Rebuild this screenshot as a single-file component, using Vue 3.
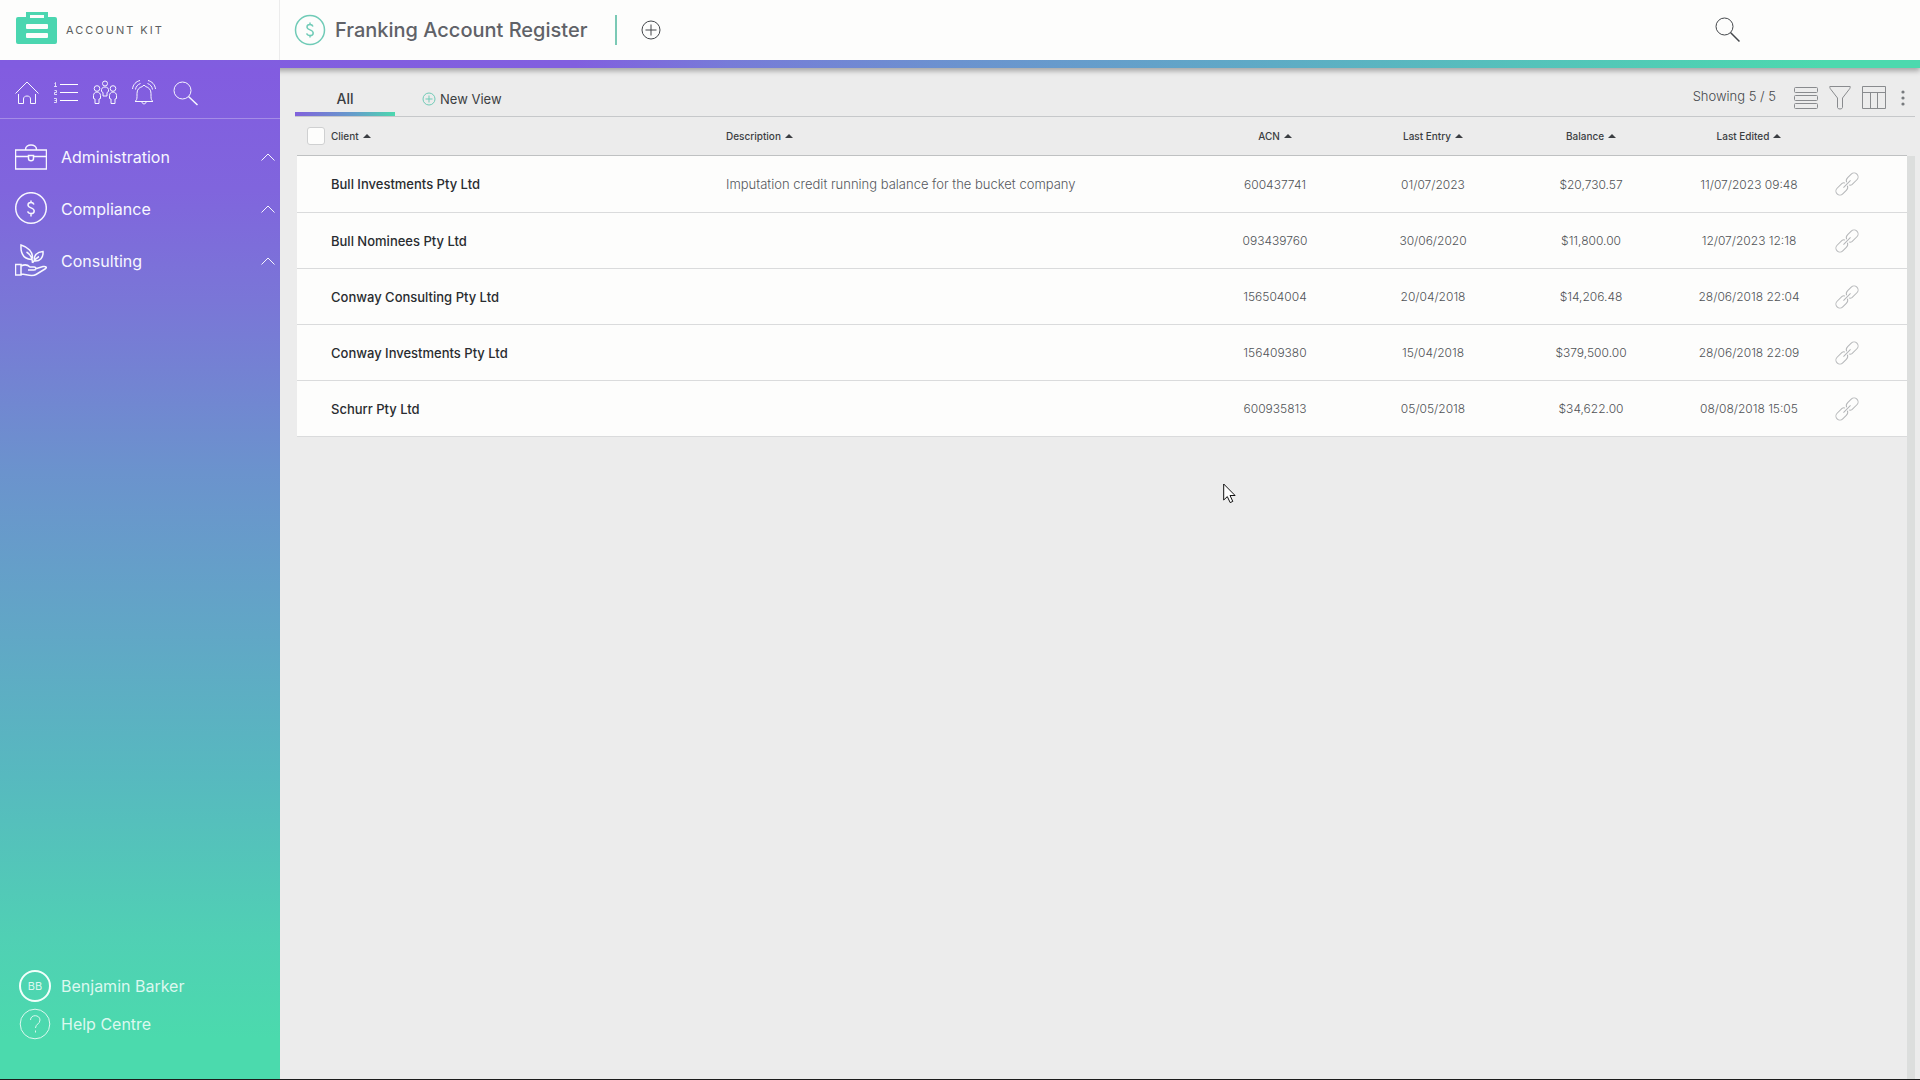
<script setup>
import { ref } from 'vue'

const menu = [
  { label: 'Administration', icon: 'briefcase' },
  { label: 'Compliance', icon: 'dollar' },
  { label: 'Consulting', icon: 'plant' },
]

const columns = [
  { key: 'description', label: 'Description', kind: 'description' },
  { key: 'acn', label: 'ACN', kind: 'value' },
  { key: 'entry', label: 'Last Entry', kind: 'value' },
  { key: 'balance', label: 'Balance', kind: 'value' },
  { key: 'edited', label: 'Last Edited', kind: 'value' },
]

const rows = [
  { client: 'Bull Investments Pty Ltd', description: 'Imputation credit running balance for the bucket company', acn: '600437741', entry: '01/07/2023', balance: '$20,730.57', edited: '11/07/2023 09:48' },
  { client: 'Bull Nominees Pty Ltd', description: '', acn: '093439760', entry: '30/06/2020', balance: '$11,800.00', edited: '12/07/2023 12:18' },
  { client: 'Conway Consulting Pty Ltd', description: '', acn: '156504004', entry: '20/04/2018', balance: '$14,206.48', edited: '28/06/2018 22:04' },
  { client: 'Conway Investments Pty Ltd', description: '', acn: '156409380', entry: '15/04/2018', balance: '$379,500.00', edited: '28/06/2018 22:09' },
  { client: 'Schurr Pty Ltd', description: '', acn: '600935813', entry: '05/05/2018', balance: '$34,622.00', edited: '08/08/2018 15:05' },
]

const selectAll = ref(false)
</script>

<template>
  <div class="app">
    <header class="topbar">
      <a class="brand" href="#">
        <svg class="brand-mark" width="42" height="34" viewBox="0 0 42 34" aria-hidden="true">
          <path fill="#4bd6b0" fill-rule="evenodd" d="M2 5h8V0h22v5h7a2 2 0 0 1 2 2v23a2 2 0 0 1-2 2H2a2 2 0 0 1-2-2V7a2 2 0 0 1 2-2zM14 3v3h14V3zM11 12a1 1 0 0 0-1 1v3a1 1 0 0 0 1 1h20a1 1 0 0 0 1-1v-3a1 1 0 0 0-1-1zM11 21a1 1 0 0 0-1 1v3a1 1 0 0 0 1 1h20a1 1 0 0 0 1-1v-3a1 1 0 0 0-1-1z" />
        </svg>
        <span class="brand-name">ACCOUNT KIT</span>
      </a>
      <div class="heading">
        <svg class="line mint bold" width="32" height="32" viewBox="0 0 32 32" aria-hidden="true">
          <circle cx="16" cy="16" r="14.500" />
          <path d="M19 12.500c-.5-1.300-1.500-2-3-2-1.800 0-3 1-3 2.500 0 3.500 6.200 2.300 6.200 6 0 1.600-1.300 2.600-3.200 2.600-1.700 0-2.900-.8-3.300-2.200M16 8.500v2M16 21.500v2" />
        </svg>
        <h1>Franking Account Register</h1>
      </div>
      <button class="icon-button add" type="button" aria-label="Add entry">
        <svg class="line" width="20" height="20" viewBox="0 0 20 20"><circle cx="10" cy="10" r="9" /><path d="M10 4.500v11M4.500 10h11" /></svg>
      </button>
      <button class="icon-button search" type="button" aria-label="Search">
        <svg class="line" width="26" height="26" viewBox="0 0 26 26"><circle cx="9.500" cy="9.500" r="8.500" /><path d="M15.500 15.500l9 9" stroke-width="1.500" /></svg>
      </button>
    </header>

    <div class="body">
      <aside class="sidebar">
        <div class="shortcuts">
          <button class="icon-button" type="button" aria-label="Home">
            <svg class="line" width="24" height="26" viewBox="0 0 24 26"><path d="M.5 13.500L12 2l11.500 11.500M3.500 14v9.500h5V19c0-2 1.500-3 3.500-3s3.500 1 3.500 3v4.500h5V14" /></svg>
          </button>
          <button class="icon-button" type="button" aria-label="Numbered list">
            <svg width="24" height="26" viewBox="0 0 24 26" fill="#fff"><path d="M6 4h18v1H6zM6 12h18v1H6zM6 20h18v1H6z" /><path class="line" d="M.5 3.500L1.500 2.500V6.500M0 6.500h3M.5 10.500h2v2h-2v2h2.500M0 18.500h2.500v4H0M.5 20.500h2" opacity=".8" /></svg>
          </button>
          <button class="icon-button" type="button" aria-label="People">
            <svg class="line" width="24" height="26" viewBox="0 0 24 26">
              <circle cx="12" cy="3.500" r="2.500" /><path d="M8.500 11.500c-.5-3 1-4.500 3.500-4.500s4 1.500 3.500 4.500l-1.500 1V16h-4v-3.500z" />
              <g v-for="x in [0, 16]" :key="x" :transform="`translate(${x} 0)`"><circle cx="4" cy="8.500" r="2.800" /><path d="M.5 18.500v-3c0-2 1.500-3.500 3.500-3.500s3.500 1.500 3.500 3.500v3L6 19v4.500H2V19z" /></g>
            </svg>
          </button>
          <button class="icon-button" type="button" aria-label="Alerts">
            <svg class="line" width="24" height="26" viewBox="0 0 24 26"><path d="M3 21.500c1.500-1 2-2.500 2-5v-3c0-4 2-6 5.500-7 0-1.500 3-1.500 3 0 3.500 1 5.500 3 5.500 7v3c0 2.500.5 4 2 5zM10 22c0 2.500 4 2.500 4 0M.5 9C1 4.500 4 1.500 8 .5M3.500 9.500c.5-3 2-5 5-6M23.500 9C23 4.500 20 1.500 16 .5M20.500 9.500c-.5-3-2-5-5-6" /></svg>
          </button>
          <button class="icon-button" type="button" aria-label="Find">
            <svg class="line" width="28" height="26" viewBox="0 0 28 26"><circle cx="11.500" cy="10.500" r="8.500" /><path d="M17.500 16.500l9 8.500" stroke-width="1.500" /></svg>
          </button>
        </div>

        <nav class="menu" aria-label="Main">
          <button v-for="item in menu" :key="item.label" class="menu-item" type="button">
            <svg v-if="item.icon === 'briefcase'" class="line bold" width="32" height="34" viewBox="0 0 32 34"><path d="M.5 10h31v19H.5zM.5 16.500h13M18.500 16.500h13M10.500 9.500c0-6 11-6 11 0" /><path d="M13.500 15.500h5v3c0 3-5 3-5 0z" /></svg>
            <svg v-else-if="item.icon === 'dollar'" class="line bold" width="32" height="34" viewBox="0 0 32 34"><circle cx="16" cy="16" r="15.300" /><path d="M19 12.500c-.5-1.300-1.500-2-3-2-1.800 0-3 1-3 2.500 0 3.500 6.200 2.300 6.200 6 0 1.600-1.300 2.600-3.200 2.600-1.700 0-2.900-.8-3.300-2.200M16 8.500v2M16 21.500v3" /></svg>
            <svg v-else class="line bold" width="32" height="34" viewBox="0 0 32 34"><path d="M17.500 19c0-5-2-8.500-6-11M16.500 15.500C9 15 5.500 9.500 6 1c7 2 12 7 11.500 13.500M19.500 17c-1-6 2.500-9 8.500-9.500.5 6-3 10-8.500 9.500zM17.500 19c2-3.500 4-5 6.500-6.500M.5 20.500H6v10.500H.5zM6 22c4-2 7-1 9 1h4c3 0 2.500 3 0 3h-6M20 25l8-2.500c3-.5 4.500 1 2 2.500l-9 5.500c-4 2.500-9 0-15-.5" /></svg>
            <span>{{ item.label }}</span>
            <svg class="line chevron" width="14" height="8" viewBox="0 0 14 8"><path d="M.5 7.500L7 1l6.500 6.500" /></svg>
          </button>
        </nav>

        <div class="account">
          <a class="account-link" href="#"><span class="avatar">BB</span><span>Benjamin Barker</span></a>
          <a class="account-link" href="#">
            <svg class="line" width="32" height="32" viewBox="0 0 32 32" aria-hidden="true"><circle cx="16" cy="16" r="14.800" /><path d="M11.500 12c0-6 9.500-5.500 9.500 0 0 4-4.500 4-4.500 8M16.500 22.500v2" /></svg>
            <span>Help Centre</span>
          </a>
        </div>
      </aside>

      <main class="content">
        <div class="toolbar">
          <div class="tabs">
            <button class="tab active" type="button">All</button>
            <button class="tab new-view" type="button">
              <svg class="line mint" width="14" height="14" viewBox="0 0 14 14" aria-hidden="true"><circle cx="7" cy="7" r="6" /><path d="M7 3.500v7M3.500 7h7" /></svg>
              New View
            </button>
          </div>
          <span class="showing">Showing 5 / 5</span>
          <div class="tools">
            <button class="icon-button" type="button" aria-label="Row layout">
              <svg class="line" width="24" height="24" viewBox="0 0 24 24"><rect x=".5" y="1.500" width="23" height="5" rx="1" /><rect x=".5" y="9.500" width="23" height="5" rx="1" /><rect x=".5" y="17.500" width="23" height="5" rx="1" /></svg>
            </button>
            <button class="icon-button" type="button" aria-label="Filter">
              <svg class="line" width="22" height="24" viewBox="0 0 22 24"><path d="M.8.5h20.400c.2 1.500-.7 2.500-1.500 3.500l-6.200 8v9.500c0 2-5 2-5 0V12L2.300 4C1.500 3 .6 2 .8.5z" /></svg>
            </button>
            <button class="icon-button" type="button" aria-label="Columns">
              <svg class="line" width="24" height="24" viewBox="0 0 24 24"><path d="M.5.5h23v22H.5zM.5 6.500h23M8.500 6.500v16M15.500 6.500v16" /></svg>
            </button>
            <button class="icon-button" type="button" aria-label="More">
              <svg width="4" height="18" viewBox="0 0 4 18" fill="#777a7d"><circle cx="2" cy="3" r="1.600" /><circle cx="2" cy="9" r="1.600" /><circle cx="2" cy="15" r="1.600" /></svg>
            </button>
          </div>
        </div>

        <div class="register">
          <table>
            <thead>
              <tr>
                <th class="check"><input v-model="selectAll" type="checkbox" aria-label="Select all" /></th>
                <th class="client"><button type="button">Client<i class="caret"></i></button></th>
                <th v-for="c in columns" :key="c.key" :class="c.kind"><button type="button">{{ c.label }}<i class="caret"></i></button></th>
                <th class="link"></th>
              </tr>
            </thead>
            <tbody>
              <tr v-for="r in rows" :key="r.client">
                <td></td>
                <td class="client">{{ r.client }}</td>
                <td v-for="c in columns" :key="c.key" :class="c.kind">{{ r[c.key] }}</td>
                <td class="link">
                  <a href="#" :aria-label="`Open ${r.client}`">
                    <svg class="line" width="22" height="22" viewBox="0 0 22 22"><g transform="rotate(-45 11 11)"><path d="M8 7H1a4 4 0 0 0-4 4 4 4 0 0 0 4 4h5c2 0 3.500-1 4-2.500M14 15h7a4 4 0 0 0 4-4 4 4 0 0 0-4-4h-5c-2 0-3.500 1-4 2.500M6 11h10M8 7c1 .2 2 1 2.300 2M14 15c-1-.2-2-1-2.300-2" /></g></svg>
                  </a>
                </td>
              </tr>
            </tbody>
          </table>
          <div class="scroll-track"></div>
        </div>
      </main>
    </div>

    <svg class="pointer" width="13" height="21" viewBox="0 0 13 21" aria-hidden="true"><path fill="#fff" stroke="#111" d="M.7 1v16l3.600-3.400 2.900 6 2.600-1.200-2.800-5.900h5.100z" /></svg>
  </div>
</template>

<style>
body {
  margin: 0;
}
</style>

<style scoped>
.app {
  box-sizing: border-box;
  min-height: 100vh;
  display: flex;
  flex-direction: column;
  background: #ececec;
  border-bottom: 1px solid #1c1c1c;
  color: #44474b;
  font-family: Inter, "Open Sans", sans-serif;
  font-size: 13px;
}
button {
  padding: 0;
  border: 0;
  background: none;
  color: inherit;
  font: inherit;
}
a {
  color: inherit;
  text-decoration: none;
}
svg {
  display: block;
  flex: none;
}
.line {
  fill: none;
  stroke: currentColor;
  stroke-width: 1;
}
.bold {
  stroke-width: 1.5;
}
.mint {
  color: #70cbb7;
}
.topbar {
  position: relative;
  display: flex;
  align-items: center;
  height: 60px;
  background: #fdfdfc;
  border-bottom: 8px solid;
  border-image: linear-gradient(90deg, #815ce0 0%, #815fdf 30%, #777bd8 38%, #6b93cf 50%, #5fa9c6 65%, #54c3ba 80%, #4cd9ae 95%) 1;
  box-shadow: 0 3px 5px rgba(0, 0, 0, 0.3);
}
.brand {
  box-sizing: border-box;
  display: flex;
  align-items: center;
  gap: 8px;
  width: 280px;
  height: 60px;
  padding-left: 16px;
  border-right: 1px solid #ececec;
}
.brand-mark {
  margin-bottom: 2px;
}
.brand-name {
  color: #5c5e61;
  font-size: 11px;
  letter-spacing: 2px;
}
.heading {
  display: flex;
  align-items: center;
  gap: 9px;
  padding: 0 28px 0 14px;
  color: #606268;
}
h1 {
  margin: 0;
  font-size: 20px;
  font-weight: 500;
  line-height: 30px;
}
.add {
  display: flex;
  align-items: center;
  height: 30px;
  padding-left: 24px;
  border-left: 2px solid #7bc9b5;
}
.search {
  margin: 0 179px 0 auto;
}
.body {
  flex: 1;
  display: flex;
}
.sidebar {
  display: flex;
  flex-direction: column;
  flex: none;
  width: 280px;
  position: relative;
  background: linear-gradient(180deg, #825ce0 0%, #8065dd 12%, #7a76d7 23%, #6b93cd 40%, #61a7c6 56%, #57b9bf 70%, #50d0b4 86%, #4bdaad 96%);
  color: #f7f7ff;
}
.shortcuts {
  display: flex;
  align-items: center;
  gap: 15px;
  height: 50px;
  padding-left: 15px;
  border-bottom: 1px solid #a58ce6;
}
.menu {
  display: flex;
  flex-direction: column;
  padding-top: 12px;
}
.menu-item {
  display: flex;
  align-items: center;
  gap: 14px;
  height: 52px;
  padding: 0 5px 0 15px;
  font-size: 16px;
}
.chevron {
  margin-left: auto;
}
.account {
  display: flex;
  flex-direction: column;
  margin-top: auto;
  padding: 0 0 36px 19px;
}
.account-link {
  display: flex;
  align-items: center;
  gap: 10px;
  height: 38px;
  color: #dcf8ef;
  font-size: 16px;
}
.avatar {
  box-sizing: border-box;
  width: 32px;
  height: 32px;
  border: 2px solid #f2fffb;
  border-radius: 50%;
  font-size: 11px;
  line-height: 28px;
  text-align: center;
}
.content {
  flex: 1;
  min-width: 0;
  display: flex;
  flex-direction: column;
  padding: 12px 5px 0 15px;
}
.toolbar {
  display: flex;
  align-items: center;
  height: 36px;
  border-bottom: 1px solid #c6c8ca;
}
.tabs {
  display: flex;
  align-self: stretch;
  margin-right: auto;
}
.tab {
  display: flex;
  align-items: center;
  gap: 4px;
  color: #3b3e42;
}
.active {
  justify-content: center;
  width: 100px;
  padding-top: 4px;
  border-bottom: 4px solid;
  border-image: linear-gradient(90deg, #8160dc, #649fca 60%, #4cd9ae) 1;
  font-size: 14px;
  font-weight: 500;
}
.new-view {
  padding: 1px 0 0 27px;
}
.showing {
  margin-right: 18px;
  padding-bottom: 4px;
  font-weight: 300;
}
.tools {
  display: flex;
  align-items: center;
  gap: 11px;
  margin-right: 10px;
  color: #898b8e;
}
.tools .icon-button:last-child {
  margin-left: 4px;
}
.register {
  flex: 1;
  display: flex;
  padding-left: 2px;
}
table {
  flex: 1;
  align-self: flex-start;
  width: 100%;
  table-layout: fixed;
  border-collapse: separate;
  border-spacing: 0;
}
th {
  box-sizing: border-box;
  height: 39px;
  padding: 0 0 1px;
  border-bottom: 1px solid #bfc1c2;
  color: #3b3e42;
  font-size: 10px;
  font-weight: 500;
  text-align: left;
}
td {
  box-sizing: border-box;
  height: 56px;
  padding: 0;
  background: #fdfdfc;
  border-bottom: 1px solid #dadbdc;
}
tbody tr:first-child td {
  height: 57px;
}
th.check {
  width: 34px;
}
th.client {
  width: 395px;
}
td.client {
  color: #292c30;
  font-weight: 500;
}
td.description {
  color: #55585c;
  font-weight: 300;
}
.value {
  width: 158px;
  text-align: center;
}
td.value {
  color: #505357;
  font-size: 12px;
  font-weight: 300;
}
.link {
  width: 79px;
}
.link a {
  display: block;
  width: 22px;
  padding-left: 8px;
  color: #b4b6b8;
}
.link svg {
  overflow: visible;
}
.check input {
  appearance: none;
  display: block;
  box-sizing: border-box;
  width: 18px;
  height: 18px;
  margin: 0 0 0 10px;
  border: 1px solid #cfd0d1;
  border-radius: 3px;
  background: #fdfdfc;
}
.caret {
  display: inline-block;
  margin: 0 0 2px 4px;
  border: solid transparent;
  border-width: 0 4px 4px;
  border-bottom-color: #3b3e42;
}
.scroll-track {
  flex: none;
  width: 8px;
  margin-top: 39px;
  background: #dcdedd;
}
.pointer {
  position: absolute;
  left: 1223px;
  top: 483px;
}
</style>
